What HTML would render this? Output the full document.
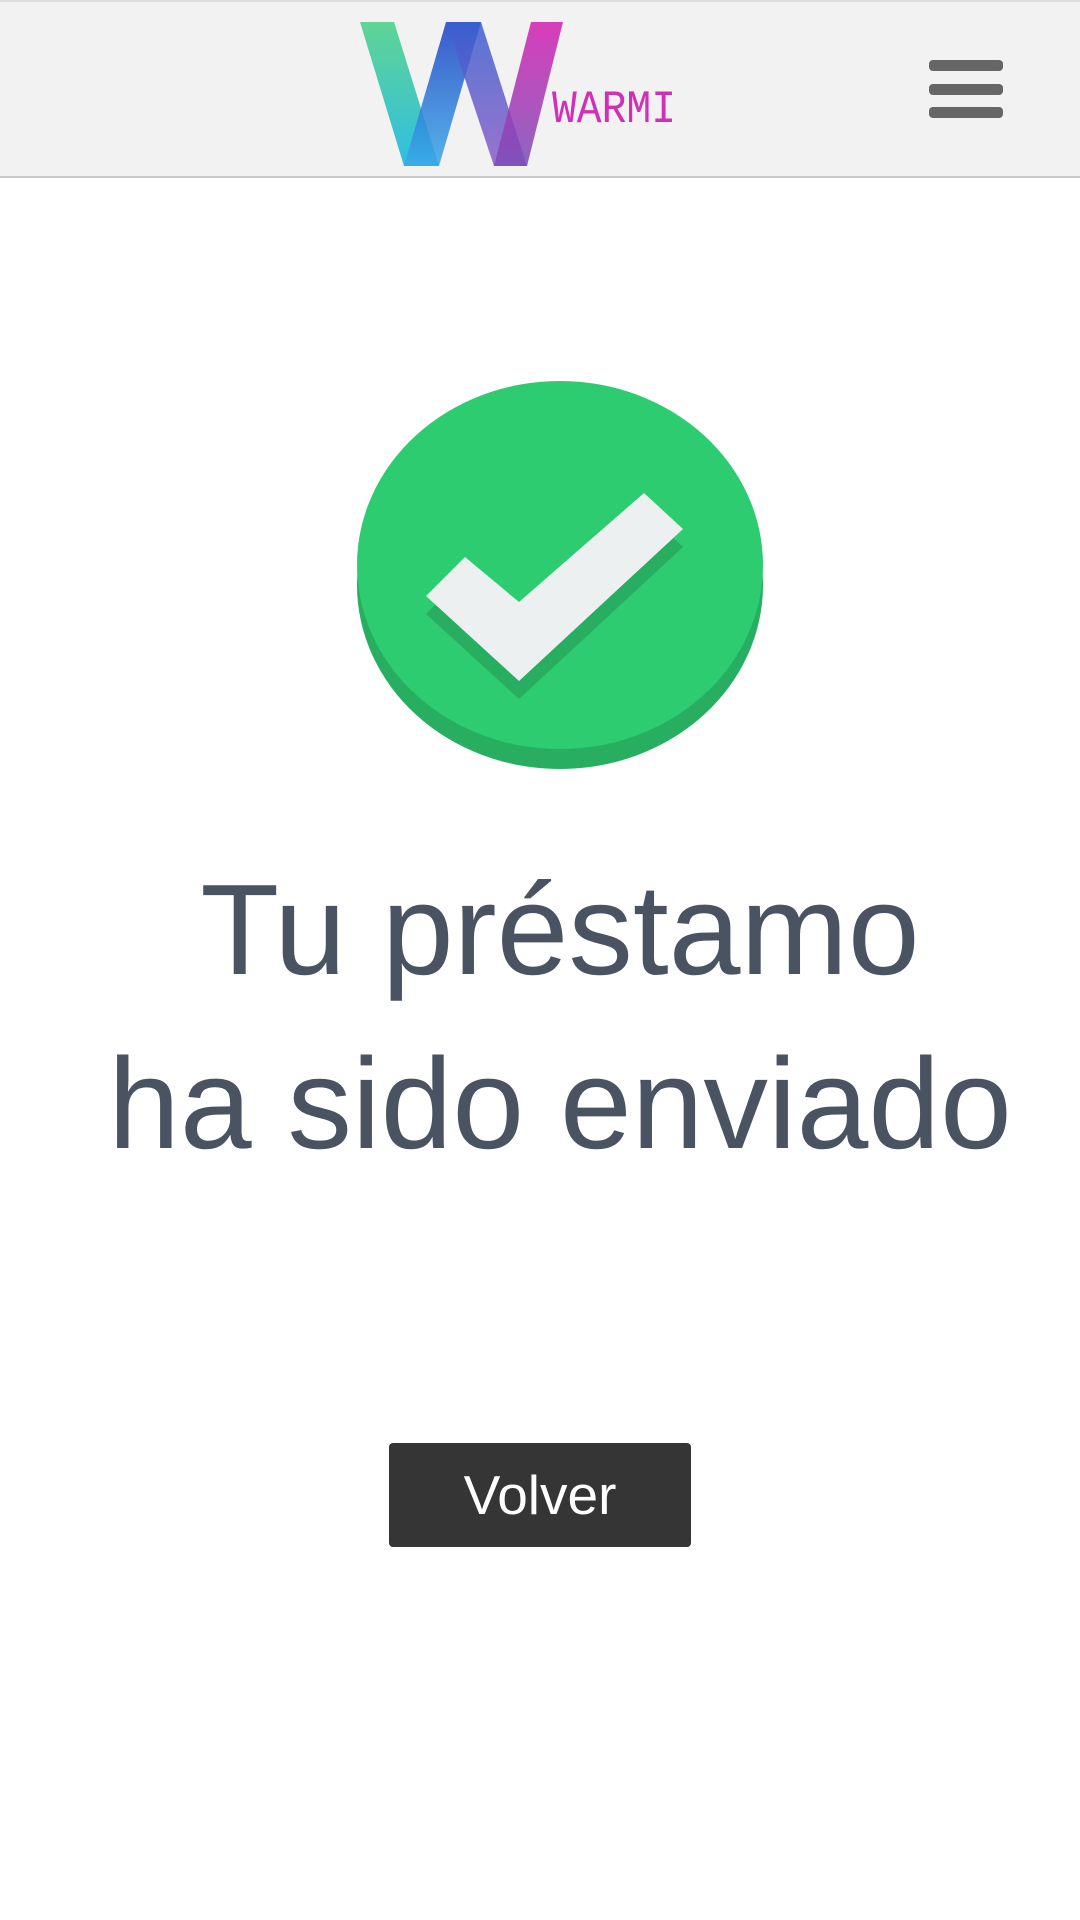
<!DOCTYPE html>
<html><head><meta charset="utf-8"><style>
html,body{margin:0;padding:0;width:1080px;height:1920px;background:#fff;overflow:hidden;font-family:"Liberation Sans",sans-serif}
.hdr{position:absolute;left:0;top:0;width:1080px;height:178px;background:#f2f2f2;border-top:2px solid #ddd;border-bottom:2px solid #c8c8c8;box-sizing:border-box}
.bar{position:absolute;left:929px;width:74px;height:11px;background:#666;border-radius:4px}
.t{position:absolute;left:20px;width:1080px;text-align:center;color:#4a5361;font-size:129px;line-height:1}
.btn{position:absolute;left:389px;top:1443px;width:302px;height:104px;background:#353535;border-radius:4px;color:#fff;font-size:55px;text-align:center;line-height:104px}
</style></head><body>
<div class="hdr"></div>
<svg style="position:absolute;left:360px;top:22px" width="320" height="146" viewBox="0 0 320 146">
<defs>
<linearGradient id="g1" x1="0" y1="0" x2="0" y2="1"><stop offset="0" stop-color="#4fd18a"/><stop offset="1" stop-color="#1ab8e0"/></linearGradient>
<linearGradient id="g2" x1="0" y1="0" x2="0" y2="1"><stop offset="0" stop-color="#1a3fc4"/><stop offset="1" stop-color="#3aa8e8"/></linearGradient>
<linearGradient id="g3" x1="0" y1="0" x2="0" y2="1"><stop offset="0" stop-color="#3a5fd0"/><stop offset="1" stop-color="#8a5cc8"/></linearGradient>
<linearGradient id="g4" x1="0" y1="0" x2="0" y2="1"><stop offset="0" stop-color="#d41eb0"/><stop offset="1" stop-color="#7a4cb8"/></linearGradient>
</defs>
<polygon points="0,0 34,0 79,144 44,144" fill="url(#g1)" opacity="0.9"/>
<polygon points="44,144 79,144 121,0 86,0" fill="url(#g2)" opacity="0.85"/>
<polygon points="86,0 121,0 167,144 134,144" fill="url(#g3)" opacity="0.85"/>
<polygon points="134,144 167,144 203,0 171,0" fill="url(#g4)" opacity="0.85"/>
<text x="192" y="100" font-family="Liberation Mono, monospace" font-size="46" fill="#d030b8" textLength="124" lengthAdjust="spacingAndGlyphs">WARMI</text>
</svg>
<div class="bar" style="top:60px"></div>
<div class="bar" style="top:84px"></div>
<div class="bar" style="top:107px"></div>
<svg style="position:absolute;left:0;top:0" width="1080" height="900">
<ellipse cx="560" cy="585" rx="203" ry="184" fill="#27ae60"/>
<ellipse cx="560" cy="565" rx="203" ry="184" fill="#2ecc71"/>
<polygon points="426,614 519,699 683,547 644,511 519,620 465,575" fill="#27ae60"/>
<polygon points="426,596 519,681 683,529 644,493 519,602 465,557" fill="#ecf0f1"/>
</svg>
<div class="t" style="top:866px">Tu préstamo</div>
<div class="t" style="top:1040px">ha sido enviado</div>
<div class="btn">Volver</div>
</body></html>
